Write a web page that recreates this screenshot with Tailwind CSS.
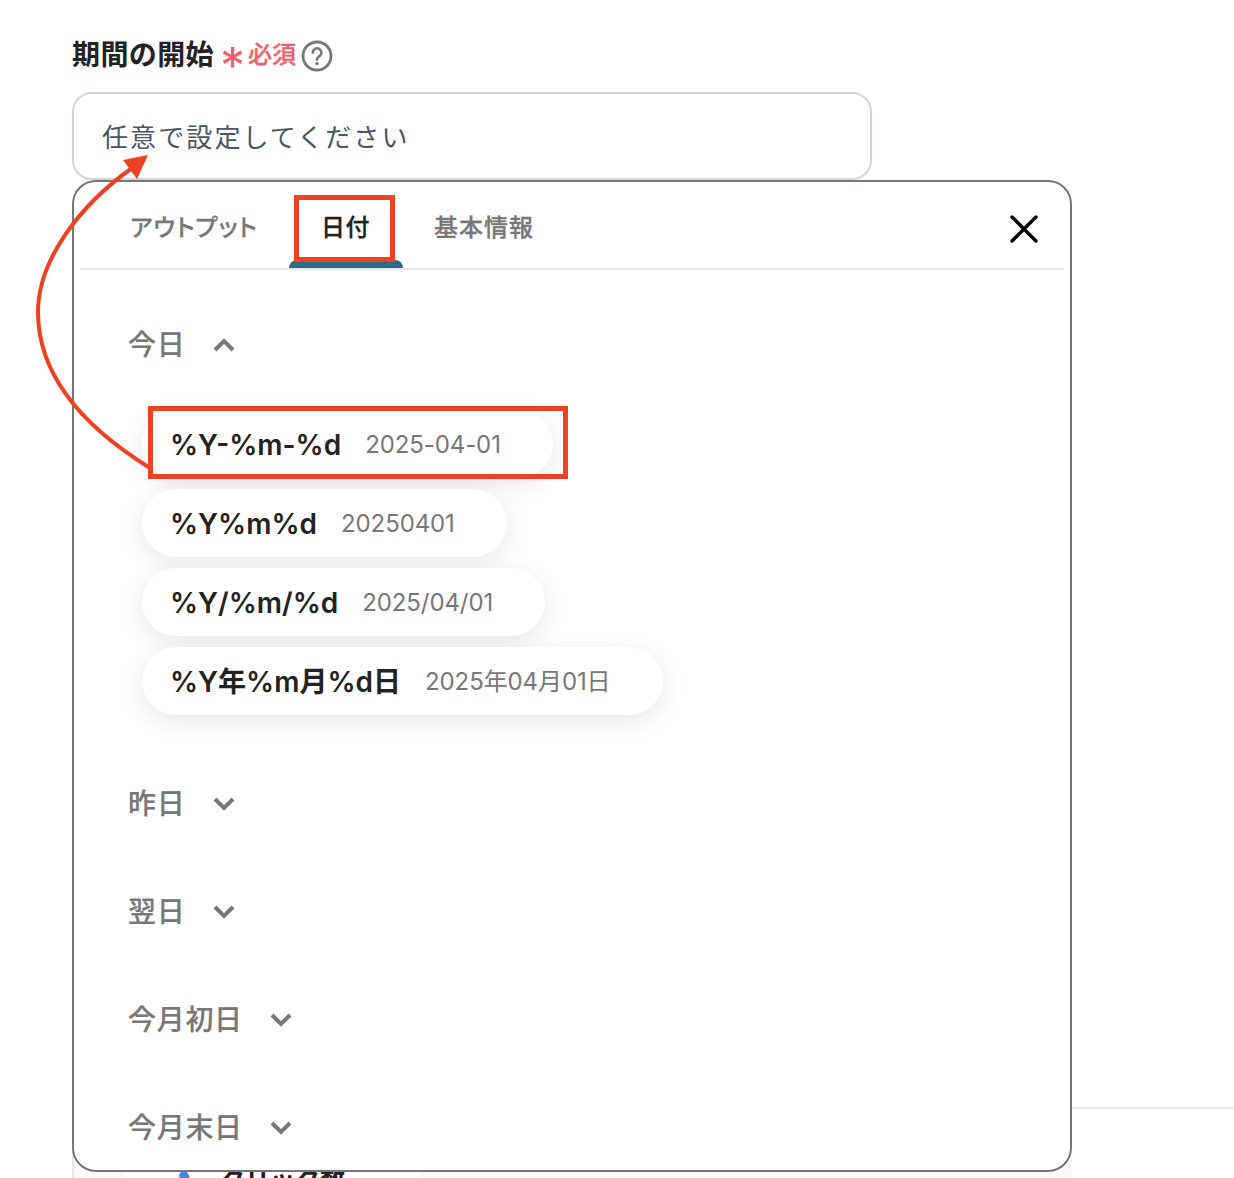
<!DOCTYPE html>
<html lang="ja">
<head>
<meta charset="utf-8">
<script src="https://cdn.jsdelivr.net/npm/@tailwindcss/browser@4"></script>
</head>
<body class="bg-white">
<div class="relative w-[1234px] h-[1178px] overflow-hidden bg-white pl-[72px] pt-[36px] font-['Inter','Noto_Sans_CJK_JP',sans-serif]">
  <div class="flex items-center h-[38px]">
    <span class="text-[28px] leading-[38px] font-bold tracking-[0.4px] text-[#222]">期間の開始</span>
    <span class="ml-[6px] w-[22px] h-[38px] relative overflow-visible"><span class="absolute left-0 top-[5px] text-[50px] leading-[50px] font-normal text-[#f0606e]">*</span></span>
    <span class="ml-[6px] text-[24px] leading-[38px] font-medium [-webkit-text-stroke-width:0.3px] text-[#f0606e]">必須</span>
    <svg class="ml-[5px] mt-[1px]" width="32" height="32" viewBox="0 0 32 32" fill="none"><circle cx="16" cy="16" r="14" stroke="#777" stroke-width="2.8"/><path d="M11.8 12.6a4.3 4.3 0 1 1 6.6 3.6c-1.5 1-2.4 1.7-2.4 3.4" stroke="#777" stroke-width="2.6" stroke-linecap="round"/><circle cx="16" cy="23.6" r="1.7" fill="#777"/></svg>
  </div>
  <div class="mt-[18px] w-[800px] h-[88px] border-2 border-[#d1d5db] rounded-[20px] pl-[28px] pt-[3px] flex items-center text-[26px] tracking-[2.1px] text-[#4b5563]">任意で設定してください</div>
  <div class="w-[1000px] h-[992px] border-2 border-[#777] rounded-[24px] bg-white overflow-hidden relative z-10">
    <div class="relative flex items-center h-[88px] mx-[6px] pt-[5px] border-b-2 border-[#e5e5e5] pl-[50px] text-[24px] font-medium [-webkit-text-stroke-width:0.3px] text-[#777]">
      <span class="w-[126px] [font-feature-settings:'palt'] tracking-[1px] whitespace-nowrap">アウトプット</span>
      <span class="ml-[65px] w-[49px] text-[#222] tracking-[0.5px] whitespace-nowrap">日付</span>
      <span class="ml-[64px] tracking-[1px] whitespace-nowrap">基本情報</span>
      <span class="absolute left-[209px] bottom-0 w-[114px] h-[8px] rounded-t-[8px] bg-[#2f6a85]"></span>
      <svg class="absolute left-[929px] top-[32px]" width="30" height="30" viewBox="0 0 30 30" fill="none"><path d="M3 3l24 24M27 3L3 27" stroke="#000" stroke-width="3.4" stroke-linecap="round"/></svg>
    </div>
    <div class="pl-[54px] pt-[50px]">
      <div class="flex items-center h-[50px] text-[28px] font-medium [-webkit-text-stroke-width:0.2px] tracking-[0.7px] text-[#777]">
        <span>今日</span>
        <svg class="ml-[28px]" width="22" height="14" viewBox="0 0 22 14" fill="none"><path d="M2 12l9-9 9 9" stroke="#777" stroke-width="4"/></svg>
      </div>
      <div class="ml-[14px] mt-[40px] flex flex-col items-start gap-[11px]">
        <div class="h-[68px] rounded-full bg-white shadow-[0_6px_24px_rgba(0,0,0,0.10)] flex items-center pt-[2px] pl-[28px] pr-[52px]">
          <span class="text-[28px] font-semibold text-[#222]">%Y-%m-%d</span><span class="ml-[24px] text-[24px] tracking-[-0.1px] text-[#777]">2025-04-01</span>
        </div>
        <div class="h-[68px] rounded-full bg-white shadow-[0_6px_24px_rgba(0,0,0,0.10)] flex items-center pt-[2px] pl-[28px] pr-[52px]">
          <span class="text-[28px] font-semibold text-[#222]">%Y%m%d</span><span class="ml-[24px] text-[24px] tracking-[-0.1px] text-[#777]">20250401</span>
        </div>
        <div class="h-[68px] rounded-full bg-white shadow-[0_6px_24px_rgba(0,0,0,0.10)] flex items-center pt-[2px] pl-[28px] pr-[52px]">
          <span class="text-[28px] font-semibold text-[#222]">%Y/%m/%d</span><span class="ml-[24px] text-[24px] tracking-[-0.1px] text-[#777]">2025/04/01</span>
        </div>
        <div class="h-[68px] rounded-full bg-white shadow-[0_6px_24px_rgba(0,0,0,0.10)] flex items-center pt-[2px] pl-[28px] pr-[53px]">
          <span class="text-[28px] font-semibold text-[#222]">%Y年%m月%d日</span><span class="ml-[24px] text-[24px] tracking-[-0.1px] text-[#777]">2025年04月01日</span>
        </div>
      </div>
      <div class="mt-[64px] flex flex-col gap-[58px] text-[28px] font-medium [-webkit-text-stroke-width:0.2px] tracking-[0.7px] text-[#777]">
        <div class="flex items-center h-[50px]"><span>昨日</span><svg class="ml-[28px]" width="22" height="14" viewBox="0 0 22 14" fill="none"><path d="M2 2l9 9 9-9" stroke="#777" stroke-width="4"/></svg></div>
        <div class="flex items-center h-[50px]"><span>翌日</span><svg class="ml-[28px]" width="22" height="14" viewBox="0 0 22 14" fill="none"><path d="M2 2l9 9 9-9" stroke="#777" stroke-width="4"/></svg></div>
        <div class="flex items-center h-[50px]"><span>今月初日</span><svg class="ml-[27px]" width="22" height="14" viewBox="0 0 22 14" fill="none"><path d="M2 2l9 9 9-9" stroke="#777" stroke-width="4"/></svg></div>
        <div class="flex items-center h-[50px]"><span>今月末日</span><svg class="ml-[27px]" width="22" height="14" viewBox="0 0 22 14" fill="none"><path d="M2 2l9 9 9-9" stroke="#777" stroke-width="4"/></svg></div>
      </div>
    </div>
  </div>
  <!-- behind the popup -->
  <div class="absolute left-[1072px] right-0 top-[1107px] h-[2px] bg-[#e5e5e5]"></div>
  <div class="absolute left-[72px] top-[1140px] w-[1000px] h-[60px] bg-[#fafafa] border-l-2 border-[#e5e5e5]"></div>
  <div class="absolute left-[124px] top-[1150px] w-[296px] h-[60px] bg-white flex items-start pl-[46px] pt-[15px] gap-[22px]">
    <svg width="28" height="30" viewBox="0 0 28 30"><path d="M14 2L2 24h9l8-14z" fill="#fbbc04"/><path d="M14 2l12 22H17L9 10z" fill="#4285f4"/></svg>
    <span class="text-[25px] font-bold text-[#222] leading-[30px] whitespace-nowrap">クリック数</span>
  </div>
  <!-- annotations -->
  <div class="absolute left-[294px] top-[195px] w-[101px] h-[67px] border-[5px] border-[#ee4123] z-20"></div>
  <div class="absolute left-[148px] top-[406px] w-[420px] h-[73px] border-[5px] border-[#ee4123] z-20"></div>
  <svg class="absolute left-0 top-0 z-20" width="300" height="500" viewBox="0 0 300 500" fill="none">
    <path d="M150 468C92 432 38 382 38 312C38 260 80 205 132 168" stroke="#ee4123" stroke-width="4"/>
    <path d="M148 155L123 160L137 179Z" fill="#ee4123"/>
  </svg>
</div>
</body>
</html>
